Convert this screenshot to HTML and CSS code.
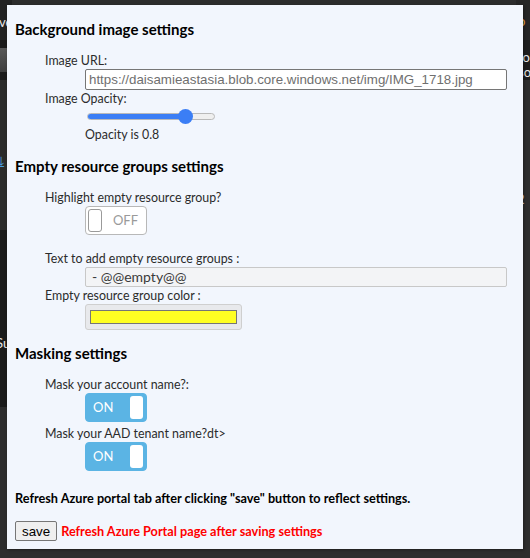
FILE: index.html
```html
<!DOCTYPE html>
<html lang="en">
<head>
<meta charset="utf-8">
<title>Settings</title>
<link rel="stylesheet" href="styles.css">
</head>
<body>
<div class="backdrop" aria-hidden="true">
  <div class="bd bd-l1"><span class="bd-text">ve</span></div>
  <div class="bd bd-l2"></div>
  <div class="bd bd-l3"></div>
  <div class="bd bd-l4"></div>
  <div class="bd bd-l5"><span class="bd-icon">&#x2913;</span></div>
  <div class="bd bd-l6"><span class="bd-text">Su</span></div>
  <div class="bd bd-r1"><span class="bd-text bd-orange">o</span></div>
  <div class="bd bd-r2"><span class="bd-text">ro<br>so</span></div>
  <div class="bd bd-r3"><span class="bd-text bd-num">2</span></div>
</div>

<main class="popup">
  <section class="section">
    <h2 class="section-title">Background image settings</h2>
    <div class="group">
      <div class="field-label">Image URL:</div>
      <div class="control">
        <input class="text-input" type="text" value="https://daisamieastasia.blob.core.windows.net/img/IMG_1718.jpg">
      </div>
      <div class="field-label">Image Opacity:</div>
      <div class="control">
        <div class="slider">
          <div class="slider-track"><div class="slider-fill"></div></div>
          <div class="slider-thumb"></div>
        </div>
      </div>
      <div class="control note">Opacity is 0.8</div>
    </div>
  </section>

  <section class="section">
    <h2 class="section-title">Empty resource groups settings</h2>
    <div class="group">
      <div class="field-label">Highlight empty resource group?</div>
      <div class="control">
        <div class="toggle toggle-off">
          <span class="toggle-knob"></span>
          <span class="toggle-text">OFF</span>
        </div>
      </div>
      <div class="field-label spaced">Text to add empty resource groups :</div>
      <div class="control">
        <div class="text-input disabled">- @@empty@@</div>
      </div>
      <div class="field-label">Empty resource group color :</div>
      <div class="control">
        <div class="color-input"><span class="color-swatch"></span></div>
      </div>
    </div>
  </section>

  <section class="section">
    <h2 class="section-title">Masking settings</h2>
    <div class="group">
      <div class="field-label">Mask your account name?:</div>
      <div class="control">
        <div class="toggle toggle-on">
          <span class="toggle-text">ON</span>
          <span class="toggle-knob"></span>
        </div>
      </div>
      <div class="field-label tight">Mask your AAD tenant name?dt&gt;</div>
      <div class="control">
        <div class="toggle toggle-on">
          <span class="toggle-text">ON</span>
          <span class="toggle-knob"></span>
        </div>
      </div>
    </div>
  </section>

  <p class="refresh-note">Refresh Azure portal tab after clicking "save" button to reflect settings.</p>

  <div class="footer">
    <button class="save-btn" type="button">save</button>
    <span class="warning">Refresh Azure Portal page after saving settings</span>
  </div>
</main>
</body>
</html>
```

FILE: styles.css
```css
html, body {
  margin: 0;
  padding: 0;
}

body {
  width: 530px;
  height: 558px;
  background: #2d2d2d;
  position: relative;
  overflow: hidden;
  font-family: "Lato", "Noto Sans", sans-serif;
  color: #222;
}

/* ---------- backdrop (portal behind the popup) ---------- */
.backdrop {
  position: absolute;
  inset: 0;
  background: #2d2d2d;
}
.bd {
  position: absolute;
  overflow: hidden;
}
.bd-text {
  position: absolute;
  color: #e8e8e8;
  font: 13px/15px "Lato", sans-serif;
}
.bd-l1 { left: 0; top: 0; width: 12px; height: 40px; background: #222; }
.bd-l1 .bd-text { left: -1px; top: 15px; }
.bd-l2 { left: 0; top: 40px; width: 12px; height: 8px; background: #1b1b1b; }
.bd-l3 { left: 0; top: 48px; width: 12px; height: 24px; background: linear-gradient(#585858, #3e3e3e); }
.bd-l4 { left: 0; top: 72px; width: 12px; height: 8px; background: #1b1b1b; }
.bd-l5 { left: 0; top: 80px; width: 12px; height: 150px; background: #2b2b2b; }
.bd-icon { position: absolute; left: -2px; top: 74px; color: #4b9fe1; font: 14px/14px "DejaVu Sans", sans-serif; }
.bd-l6 { left: 0; top: 230px; width: 12px; height: 177px; background: #1b1b1b; }
.bd-l6 .bd-text { left: -4px; top: 106px; }
.bd-r1 { right: 0; top: 0; width: 14px; height: 40px; background: #262626; }
.bd-r1 .bd-text { left: 2px; top: 14px; }
.bd-orange { color: #f0b14a !important; }
.bd-r2 { right: 0; top: 40px; width: 14px; height: 40px; background: #1e1e1e; }
.bd-r2 .bd-text { left: 2px; top: 10px; }
.bd-r3 { right: 0; top: 80px; width: 14px; height: 470px; background: #2e2e2e; }
.bd-num { left: 1px; top: 112px; }

/* ---------- popup ---------- */
.popup {
  position: relative;
  margin: 5px 0 0 7px;
  width: 516px;
  height: 544px;
  box-sizing: border-box;
  padding: 14px 8px 6px 8px;
  background: #f2f6fd;
  box-shadow: 1px 1px 3px rgba(0, 0, 0, 0.35);
}

.section + .section {
  margin-top: 13px;
}

.section-title {
  margin: 0;
  font: 700 15px/20px "Lato", "Noto Sans", sans-serif;
  color: #000;
}

.group {
  margin-top: 13px;
  padding-left: 30px;
}

.field-label {
  font-size: 12.4px;
  line-height: 17px;
  color: #2b2b2b;
}
.field-label.spaced { margin-top: 15px; }
.field-label.tight { margin-top: 3px; }

.control {
  padding-left: 40px;
}

.note {
  font-size: 12.4px;
  line-height: 17px;
  color: #2b2b2b;
}

/* text inputs */
.text-input {
  display: block;
  box-sizing: border-box;
  width: 422px;
  height: 21px;
  margin: 0;
  padding: 1px 3px;
  border: 1px solid #767676;
  border-radius: 2px;
  background: #fff;
  font: 13.333px "Liberation Sans", Arial, sans-serif;
  color: #6f6f6f;
}
.text-input.disabled {
  height: 20px;
  padding: 0 6px;
  border-color: #c8c8c8;
  background: #f3f4f6;
  color: #3a3a3a;
  font: 14px/18px "Lato", "Noto Sans", sans-serif;
}

/* slider */
.slider {
  position: relative;
  display: flex;
  align-items: center;
  width: 128px;
  height: 19px;
  margin-left: 2px;
}
.slider-track {
  flex: 1;
  height: 5px;
  border: 1px solid #b9b9b9;
  border-radius: 4px;
  background: #efefef;
  overflow: hidden;
}
.slider-fill {
  width: 78%;
  height: 100%;
  background: #3b7ef5;
}
.slider-thumb {
  position: absolute;
  left: 91px;
  top: 2px;
  width: 15px;
  height: 15px;
  border-radius: 50%;
  background: #3b7ef5;
}

/* toggles */
.toggle {
  box-sizing: border-box;
  display: flex;
  align-items: center;
  justify-content: space-between;
  width: 62px;
  height: 29px;
  padding: 3px;
  border-radius: 4px;
  font: 13px/17px "Lato", "Noto Sans", sans-serif;
}
.toggle-off {
  background: #fff;
  border: 1px solid #b8b8b8;
}
.toggle-off .toggle-knob {
  box-sizing: border-box;
  width: 14px;
  height: 23px;
  border: 1px solid #9a9a9a;
  border-radius: 3px;
  margin-left: -1px;
}
.toggle-off .toggle-text {
  color: #9a9a9a;
  margin-right: 5px;
}
.toggle-on {
  background: #5bb4e4;
  border: 1px solid #5bb4e4;
}
.toggle-on .toggle-text {
  color: #fff;
  margin-left: 4px;
}
.toggle-on .toggle-knob {
  width: 13px;
  height: 23px;
  border-radius: 3px;
  background: #fff;
}

/* color picker */
.color-input {
  box-sizing: border-box;
  display: flex;
  width: 157px;
  height: 26px;
  padding: 5px 4px;
  border: 1px solid #cfcfcf;
  border-radius: 3px;
  background: #e8e9ec;
}
.color-swatch {
  flex: 1;
  border: 1px solid #767676;
  background: #ffff22;
}

/* footer */
.refresh-note {
  margin: 19px 0 0;
  font: 700 12.7px/17px "Lato", "Noto Sans", sans-serif;
  color: #000;
}

.footer {
  display: flex;
  align-items: center;
  gap: 4px;
  margin-top: 14px;
}
.save-btn {
  box-sizing: border-box;
  height: 20px;
  padding: 1px 6px;
  border: 1px solid #767676;
  border-radius: 2px;
  background: #efefef;
  font: 13.333px "Liberation Sans", Arial, sans-serif;
  color: #000;
}
.warning {
  font: 700 12.7px/17px "Lato", "Noto Sans", sans-serif;
  color: #ff0000;
}
```
